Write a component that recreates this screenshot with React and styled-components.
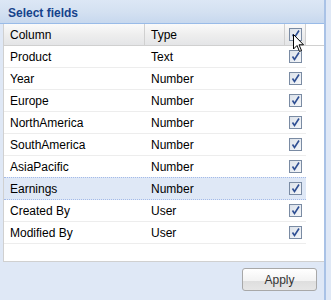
import React from 'react';
import styled, { createGlobalStyle } from 'styled-components';

const Global = createGlobalStyle`
  html, body { margin: 0; padding: 0; }
  body {
    background: #dfe8f6;
    font-family: "Liberation Sans", Arial, sans-serif;
  }
`

const Window = styled.div`
  width: 331px;
  height: 300px;
  display: flex;
  flex-direction: column;
  background: #dfe8f6;
  position: relative;
  overflow: hidden;
`
const Panel = styled.div`
  width: 326px;
  height: 300px;
  display: flex;
  flex-direction: column;
  border-right: 2px solid #a9c2e6;
  box-sizing: border-box;
`
const Header = styled.div`
  height: 24px;
  display: flex;
  align-items: center;
  padding: 3px 8px 0;
  box-sizing: border-box;
  background: linear-gradient(#dce7f5, #d3e0f1 55%, #c7d8ee);
  border-bottom: 1px solid #99bbe8;
  color: #15428b;
  font-weight: bold;
  font-size: 12px;
`
const Body = styled.div`
  flex: 1;
  display: flex;
  flex-direction: column;
  padding: 0 0 0 3px;
`
const Grid = styled.div`
  background: #fff;
  height: 237px;
  border-left: 1px solid #d0d0d0;
  border-bottom: 1px solid #d0d0d0;
  display: flex;
  flex-direction: column;
`
const HeadRow = styled.div`
  display: grid;
  grid-template-columns: 141px 140px 21px 1fr;
  height: 21px;
  background: linear-gradient(#fafafa, #eeeeee 50%, #e4e5e7);
  border-bottom: 1px solid #d0d0d0;
  font-size: 12px;
  color: #000;
`
const HeadCell = styled.div`
  display: flex;
  align-items: center;
  justify-content: ${p => (p.$center ? 'center' : 'flex-start')};
  padding-left: ${p => (p.$center ? '0' : '6px')};
  border-right: ${p => (p.$last ? 'none' : '1px solid #d0d0d0')};
  ${p => p.$fill && 'background: #fff; border-right: none;'}
`
const Row = styled.div`
  display: grid;
  grid-template-columns: 141px 140px 21px;
  width: 302px;
  height: 21px;
  border-bottom: 1px ${p => (p.$selected ? 'dotted #a3bae9' : 'solid #ededed')};
  border-top: ${p => (p.$selected ? '1px dotted #a3bae9' : 'none')};
  margin-top: ${p => (p.$selected ? '-1px' : '0')};
  background: ${p => (p.$selected ? '#dfe8f6' : '#fff')};
  font-size: 12px;
  color: #000;
`
const Cell = styled.div`
  display: flex;
  align-items: center;
  justify-content: ${p => (p.$center ? 'center' : 'flex-start')};
  padding-left: ${p => (p.$center ? '0' : '6px')};
`
const Check = styled.span`
  width: 13px;
  height: 13px;
  box-sizing: border-box;
  border: 1px solid #7a8ba3;
  background: linear-gradient(135deg, #dce2ea, #f4f6f9);
  display: flex;
  align-items: center;
  justify-content: center;
`
const Footer = styled.div`
  display: flex;
  justify-content: flex-end;
  padding: 6px 7px 0 0;
`
const Button = styled.button`
  width: 75px;
  height: 23px;
  border: 1px solid #a8a8a8;
  border-radius: 3px;
  background: linear-gradient(#ffffff, #f3f3f3 55%, #dedede 56%, #e6e6e6);
  font-family: "Liberation Sans", Arial, sans-serif;
  font-size: 12px;
  color: #333;
  padding: 0;
`
const Cursor = styled.svg`
  position: absolute;
  left: 293px;
  top: 34px;
`

const Tick = () => (
  <svg width="11" height="11" viewBox="0 0 11 11">
    <path d="M2.5 5.5 L4.5 8.5 L9 1.5" stroke="#2f4f93" strokeWidth="1.6" fill="none" />
  </svg>
)

const rows = [
  ['Product', 'Text'],
  ['Year', 'Number'],
  ['Europe', 'Number'],
  ['NorthAmerica', 'Number'],
  ['SouthAmerica', 'Number'],
  ['AsiaPacific', 'Number'],
  ['Earnings', 'Number'],
  ['Created By', 'User'],
  ['Modified By', 'User'],
]

const App = () => {
  return (
    <Window>
      <Global />
      <Panel>
        <Header>Select fields</Header>
        <Body>
          <Grid>
            <HeadRow>
              <HeadCell>Column</HeadCell>
              <HeadCell>Type</HeadCell>
              <HeadCell $center><Check><Tick /></Check></HeadCell>
              <HeadCell $last $fill />
            </HeadRow>
            {rows.map(([name, type]) => (
              <Row key={name} $selected={name === 'Earnings'}>
                <Cell>{name}</Cell>
                <Cell>{type}</Cell>
                <Cell $center><Check><Tick /></Check></Cell>
              </Row>
            ))}
          </Grid>
          <Footer>
            <Button>Apply</Button>
          </Footer>
        </Body>
      </Panel>
      <Cursor width="12" height="19" viewBox="0 0 12 19">
        <path d="M0.5 0.5 L0.5 15 L4 11.5 L6.5 17.5 L8.5 16.5 L6 10.8 L10.5 10.8 Z" fill="#fff" stroke="#000" strokeWidth="1" />
      </Cursor>
    </Window>
  )
}

export default App;
